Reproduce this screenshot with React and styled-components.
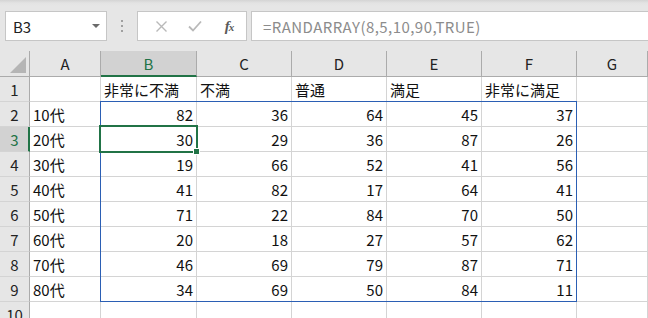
import React from 'react';
import styled, { createGlobalStyle } from 'styled-components';

const Global = createGlobalStyle`
  html, body { margin: 0; padding: 0; background: #ffffff; overflow: hidden; }
  body { font-family: "Noto Sans CJK JP", "Noto Sans", sans-serif; }
`;

const Page = styled.div`
  width: 648px;
  height: 318px;
  overflow: hidden;
  background: #fff;
`;

const FormulaBar = styled.div`
  box-sizing: border-box;
  height: 51px;
  display: flex;
  align-items: flex-start;
  padding: 11px 0 0 5px;
  background: linear-gradient(#d4d4d4 0px, #e3e3e3 3px, #e6e6e6 6px);
`;

const NameBox = styled.div`
  box-sizing: border-box;
  width: 102px;
  height: 30px;
  background: #fff;
  border: 1px solid #c6c6c6;
  display: flex;
  align-items: center;
  justify-content: space-between;
  padding: 0 6px 0 7px;
  font-size: 15px;
  color: #222;
`;

const Caret = styled.span`
  width: 0;
  height: 0;
  border-left: 4px solid transparent;
  border-right: 4px solid transparent;
  border-top: 4px solid #6a6a6a;
`;

const Grip = styled.div`
  width: 30px;
  height: 30px;
  display: flex;
  flex-direction: column;
  align-items: center;
  justify-content: center;
  gap: 3px;
  span {
    width: 2px;
    height: 2px;
    background: #a0a0a0;
  }
`;

const ButtonsBox = styled.div`
  box-sizing: border-box;
  width: 110px;
  height: 30px;
  background: #fff;
  border: 1px solid #c6c6c6;
  display: flex;
  align-items: center;
  padding-left: 6px;
`;

const BarButton = styled.div`
  width: 37px;
  height: 28px;
  display: flex;
  align-items: center;
  justify-content: center;
  color: ${p => p.$dim ? '#b9b9b9' : '#555'};
`;

const Fx = styled.span`
  font-family: "Liberation Serif", "DejaVu Serif", serif;
  font-style: italic;
  font-size: 15px;
  font-weight: bold;
  color: #5a5a5a;
  letter-spacing: -1px;
  sub { font-size: 11px; vertical-align: baseline; }
`;

const FormulaInput = styled.div`
  box-sizing: border-box;
  flex: 1;
  height: 30px;
  margin-left: 4px;
  background: #fff;
  border: 1px solid #c6c6c6;
  border-right: none;
  display: flex;
  align-items: center;
  padding-left: 11px;
  font-size: 15px;
  letter-spacing: 0.45px;
  color: #8c8c8c;
  white-space: nowrap;
`;

const Sheet = styled.div`
  display: grid;
  grid-template-columns: 30px 71px 96px repeat(4, 95px) 1fr;
  grid-template-rows: 26px;
  grid-auto-rows: 25px;
`;

const Corner = styled.div`
  grid-row: 1;
  grid-column: 1;
  box-sizing: border-box;
  background: #e6e6e6;
  border-right: 1px solid #ababab;
  border-bottom: 1px solid #ababab;
  position: relative;
  &::after {
    content: '';
    position: absolute;
    right: 3px;
    bottom: 3px;
    width: 0;
    height: 0;
    border-left: 16px solid transparent;
    border-bottom: 16px solid #b5b5b5;
  }
`;

const ColHead = styled.div`
  grid-row: 1;
  grid-column: ${p => p.$c};
  box-sizing: border-box;
  background: ${p => p.$active ? '#d2d2d2' : '#e6e6e6'};
  border-right: 1px solid #ababab;
  border-bottom: ${p => p.$active ? '2px solid #217346' : '1px solid #ababab'};
  display: flex;
  align-items: center;
  justify-content: center;
  font-size: 15px;
  color: ${p => p.$active ? '#217346' : '#222'};
  padding-top: ${p => p.$active ? '1px' : '0'};
`;

const RowHead = styled.div`
  grid-row: ${p => p.$r};
  grid-column: 1;
  box-sizing: border-box;
  background: ${p => p.$active ? '#d2d2d2' : '#e6e6e6'};
  border-right: ${p => p.$active ? '2px solid #217346' : '1px solid #ababab'};
  border-bottom: 1px solid #d4d4d4;
  display: flex;
  align-items: center;
  justify-content: center;
  font-size: 15px;
  color: ${p => p.$active ? '#217346' : '#222'};
  padding-left: ${p => p.$active ? '1px' : '0'};
`;

const Cell = styled.div`
  grid-row: ${p => p.$r};
  grid-column: ${p => p.$c};
  box-sizing: border-box;
  border-right: 1px solid #d4d4d4;
  border-bottom: 1px solid #d4d4d4;
  display: flex;
  align-items: center;
  justify-content: ${p => p.$num ? 'flex-end' : 'flex-start'};
  padding: 0 3px 0 3px;
  font-size: 15px;
  color: #111;
  white-space: nowrap;
  overflow: hidden;
`;

const RangeBox = styled.div`
  grid-column: 3 / 8;
  grid-row: 3 / 11;
  margin: -1px 0 0 -1px;
  border: 1px solid #2b5fb4;
  pointer-events: none;
  z-index: 1;
`;

const ActiveBox = styled.div`
  grid-column: 3 / 4;
  grid-row: 4 / 5;
  margin: -2px -1px -1px -2px;
  border: 2px solid #217346;
  position: relative;
  pointer-events: none;
  z-index: 2;
`;

const FillHandle = styled.span`
  position: absolute;
  right: -4px;
  bottom: -4px;
  width: 5px;
  height: 5px;
  background: #217346;
  border: 1px solid #fff;
`;

const cols = ['A', 'B', 'C', 'D', 'E', 'F', 'G'];
const labels = ['', '非常に不満', '不満', '普通', '満足', '非常に満足', ''];
const data = [
  ['10代', 82, 36, 64, 45, 37],
  ['20代', 30, 29, 36, 87, 26],
  ['30代', 19, 66, 52, 41, 56],
  ['40代', 41, 82, 17, 64, 41],
  ['50代', 71, 22, 84, 70, 50],
  ['60代', 20, 18, 27, 57, 62],
  ['70代', 46, 69, 79, 87, 71],
  ['80代', 34, 69, 50, 84, 11],
];

export default function App() {
  return (
    <Page>
      <Global />
      <FormulaBar>
        <NameBox>
          <span>B3</span>
          <Caret />
        </NameBox>
        <Grip><span /><span /><span /></Grip>
        <ButtonsBox>
          <BarButton $dim>
            <svg width="13" height="13" viewBox="0 0 13 13">
              <path d="M1.5 1.5 L11.5 11.5 M11.5 1.5 L1.5 11.5" stroke="currentColor" strokeWidth="1.4" fill="none" />
            </svg>
          </BarButton>
          <BarButton $dim>
            <svg width="14" height="12" viewBox="0 0 14 12">
              <path d="M1 6.5 L5 10.5 L13 1.5" stroke="currentColor" strokeWidth="1.8" fill="none" />
            </svg>
          </BarButton>
          <BarButton>
            <Fx>f<sub>x</sub></Fx>
          </BarButton>
        </ButtonsBox>
        <FormulaInput>=RANDARRAY(8,5,10,90,TRUE)</FormulaInput>
      </FormulaBar>
      <Sheet>
        <Corner />
        {cols.map((c, j) => (
          <ColHead key={c} $c={j + 2} $active={c === 'B'}>{c}</ColHead>
        ))}
        <RowHead $r={2}>1</RowHead>
        {labels.map((l, j) => <Cell key={j} $r={2} $c={j + 2}>{l}</Cell>)}
        {data.map((row, i) => (
          <React.Fragment key={i}>
            <RowHead $r={i + 3} $active={i === 1}>{i + 2}</RowHead>
            <Cell $r={i + 3} $c={2}>{row[0]}</Cell>
            {row.slice(1).map((v, j) => <Cell key={j} $r={i + 3} $c={j + 3} $num>{v}</Cell>)}
            <Cell $r={i + 3} $c={8} />
          </React.Fragment>
        ))}
        <RowHead $r={11}>10</RowHead>
        {cols.map((c, j) => <Cell key={c} $r={11} $c={j + 2} />)}
        <RangeBox />
        <ActiveBox><FillHandle /></ActiveBox>
      </Sheet>
    </Page>
  );
}
